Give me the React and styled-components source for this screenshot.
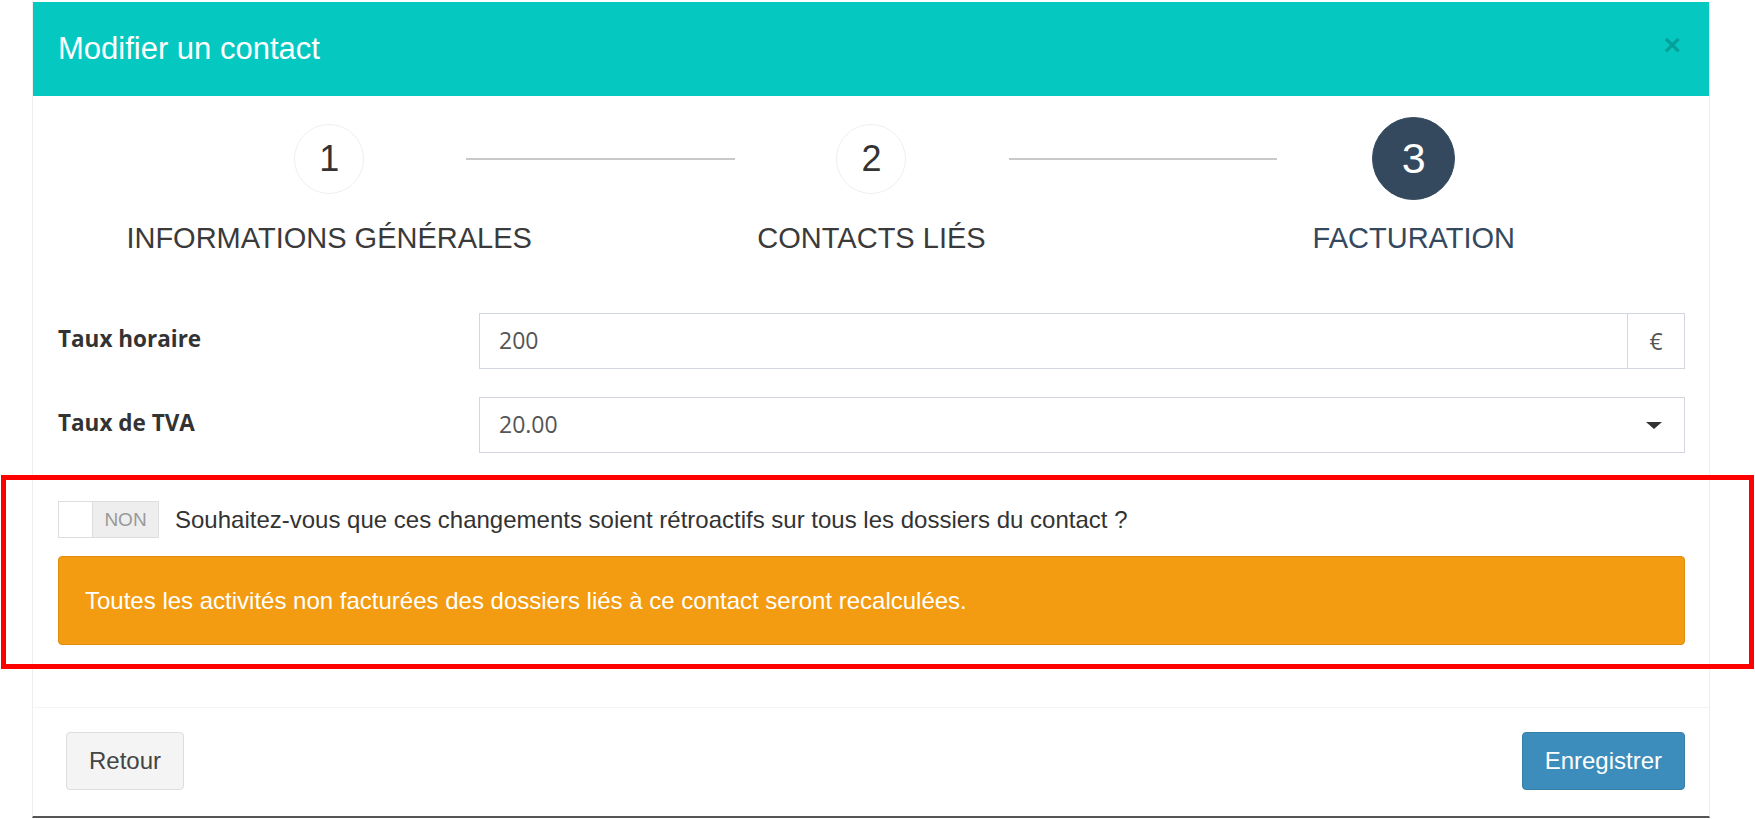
import React from 'react'
import styled, { createGlobalStyle } from 'styled-components'

const GlobalStyle = createGlobalStyle`
  html, body { margin: 0; padding: 0; background: #fff; }
  body { font-family: "Liberation Sans", Arial, sans-serif; color: #333; }
  * { box-sizing: border-box; }
`

const Page = styled.div`
  width: 1755px;
  height: 819px;
  overflow: hidden;
  padding: 2px 0 0 32px;
`

const Modal = styled.div`
  width: 1678px;
  background: #fff;
  border-left: 1px solid #eeeeee;
  border-right: 1px solid #eeeeee;
  border-bottom: 2px solid #555;
`

const Header = styled.div`
  height: 94px;
  background: #05c9c1;
  display: flex;
  align-items: center;
  justify-content: space-between;
  padding: 0 28px 0 25px;
`

const Title = styled.h4`
  margin: 0;
  font-size: 31px;
  font-weight: normal;
  color: #fff;
`

const Close = styled.span`
  font-size: 30px;
  font-weight: bold;
  line-height: 1;
  color: #000;
  opacity: 0.2;
  margin-top: -8px;
`

const Body = styled.div`
  padding: 21px 24px 62px 25px;
`

const Steps = styled.div`
  display: grid;
  grid-template-columns: repeat(3, 1fr);
`

const Step = styled.div`
  position: relative;
  display: flex;
  flex-direction: column;
  align-items: center;
  ${({ first }) => !first && `
    &::before {
      content: "";
      position: absolute;
      top: 41px;
      height: 2px;
      left: calc(-50% + 137px);
      right: calc(50% + 137px);
      background: #c9c9c9;
    }
  `}
`

const CircleSlot = styled.div`
  height: 83px;
  display: flex;
  align-items: center;
`

const Circle = styled.div`
  width: ${({ active }) => (active ? 83 : 70)}px;
  height: ${({ active }) => (active ? 83 : 70)}px;
  border-radius: 50%;
  display: flex;
  align-items: center;
  justify-content: center;
  font-size: ${({ active }) => (active ? 43 : 36)}px;
  background: ${({ active }) => (active ? '#34495e' : '#fff')};
  color: ${({ active }) => (active ? '#fff' : '#333')};
  border: 1px solid ${({ active }) => (active ? '#34495e' : '#efefef')};
`

const StepLabel = styled.div`
  margin-top: 22px;
  font-size: 29px;
  line-height: 32px;
  white-space: nowrap;
  color: ${({ active }) => (active ? '#34495e' : '#3a3a3a')};
`

const Form = styled.div`
  margin-top: 59px;
  display: flex;
  flex-direction: column;
  gap: 28px;
`

const Row = styled.div`
  display: grid;
  grid-template-columns: 421px 1fr;
  align-items: center;
`

const Label = styled.label`
  font-family: "Open Sans", sans-serif;
  font-weight: 700;
  font-size: 22.5px;
  color: #333;
  margin-top: -6px;
`

const Field = styled.div`
  height: 56px;
  display: flex;
  border: 1px solid #d2d6de;
  background: #fff;
  font-family: "Open Sans", sans-serif;
  font-size: 23px;
  color: #555;
`

const Value = styled.div`
  flex: 1;
  display: flex;
  align-items: center;
  padding-left: 19px;
  margin-top: -3px;
`

const Addon = styled.div`
  width: 57px;
  display: flex;
  align-items: center;
  justify-content: center;
  border-left: 1px solid #d2d6de;
`

const Caret = styled.span`
  width: 0;
  height: 0;
  align-self: center;
  margin-right: 22px;
  border-left: 8px solid transparent;
  border-right: 8px solid transparent;
  border-top: 7px solid #333;
`

const Annotated = styled.div`
  position: relative;
  margin-top: 48px;
  &::after {
    content: "";
    position: absolute;
    top: -26px;
    bottom: -24px;
    left: -57px;
    right: -69px;
    border: 5px solid #ff0000;
    pointer-events: none;
  }
`

const ToggleRow = styled.div`
  display: flex;
  align-items: center;
  gap: 16px;
  font-size: 24px;
  color: #333;
`

const Toggle = styled.div`
  width: 101px;
  height: 37px;
  display: flex;
  border: 1px solid #dddddd;
  background: #eeeeee;
`

const Handle = styled.span`
  width: 34px;
  background: #fff;
  border-right: 1px solid #dddddd;
`

const ToggleText = styled.span`
  flex: 1;
  display: flex;
  align-items: center;
  justify-content: center;
  font-size: 19px;
  color: #999;
`

const Alert = styled.div`
  margin-top: 18px;
  height: 89px;
  display: flex;
  align-items: center;
  padding: 0 26px;
  background: #f39c12;
  border: 1px solid #e08e0b;
  border-radius: 4px;
  color: #fff;
  font-size: 24px;
`

const Footer = styled.div`
  display: flex;
  justify-content: space-between;
  padding: 24px 24px 26px 33px;
  border-top: 1px solid #f4f4f4;
`

const Button = styled.button`
  height: 58px;
  padding: 0 22px;
  font-family: "Liberation Sans", Arial, sans-serif;
  font-size: 24px;
  border-radius: 4px;
  border: 1px solid ${({ primary }) => (primary ? '#367fa9' : '#dddddd')};
  background: ${({ primary }) => (primary ? '#3c8dbc' : '#f4f4f4')};
  color: ${({ primary }) => (primary ? '#fff' : '#444')};
`

const steps = [
  { n: 1, label: 'INFORMATIONS GÉNÉRALES' },
  { n: 2, label: 'CONTACTS LIÉS' },
  { n: 3, label: 'FACTURATION', active: true },
]

export default function App() {
  return (
    <>
      <GlobalStyle />
      <Page>
        <Modal>
          <Header>
            <Title>Modifier un contact</Title>
            <Close>×</Close>
          </Header>
          <Body>
            <Steps>
              {steps.map((s, i) => (
                <Step key={s.n} first={i === 0}>
                  <CircleSlot>
                    <Circle active={s.active}>{s.n}</Circle>
                  </CircleSlot>
                  <StepLabel active={s.active}>{s.label}</StepLabel>
                </Step>
              ))}
            </Steps>

            <Form>
              <Row>
                <Label>Taux horaire</Label>
                <Field>
                  <Value>200</Value>
                  <Addon>€</Addon>
                </Field>
              </Row>
              <Row>
                <Label>Taux de TVA</Label>
                <Field>
                  <Value>20.00</Value>
                  <Caret />
                </Field>
              </Row>
            </Form>

            <Annotated>
              <ToggleRow>
                <Toggle>
                  <Handle />
                  <ToggleText>NON</ToggleText>
                </Toggle>
                Souhaitez-vous que ces changements soient rétroactifs sur tous les dossiers du contact ?
              </ToggleRow>
              <Alert>
                Toutes les activités non facturées des dossiers liés à ce contact seront recalculées.
              </Alert>
            </Annotated>
          </Body>
          <Footer>
            <Button>Retour</Button>
            <Button primary>Enregistrer</Button>
          </Footer>
        </Modal>
      </Page>
    </>
  )
}
